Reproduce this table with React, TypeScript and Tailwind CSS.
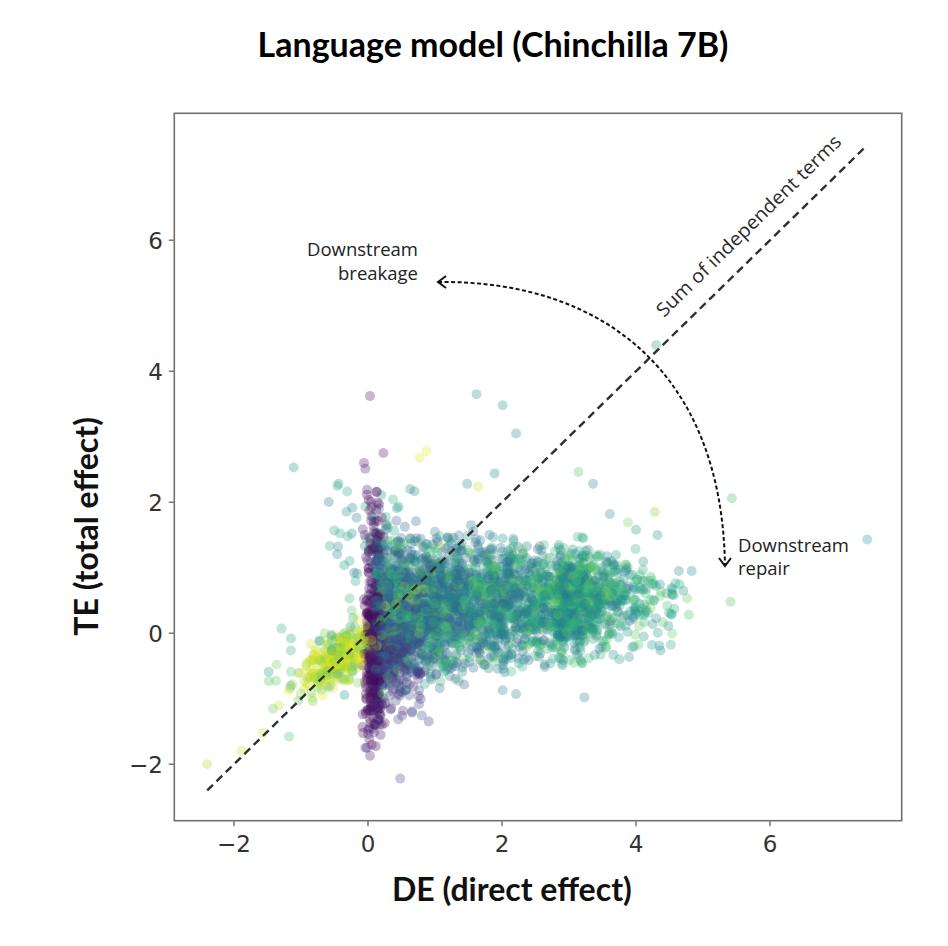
import { useMemo } from 'react';

type Pt = { x: number; y: number; c: number };

const X0 = 368;
const SX = 67;
const Y0 = 633.2;
const SY = 65.5;
const px = (x: number) => X0 + SX * x;
const py = (y: number) => Y0 - SY * y;

const VIRIDIS = [
  [68, 1, 84],
  [72, 36, 117],
  [65, 68, 135],
  [53, 95, 141],
  [42, 120, 142],
  [33, 145, 140],
  [34, 168, 132],
  [68, 191, 112],
  [122, 209, 81],
  [189, 223, 38],
  [253, 231, 37],
];

function viridis(t: number) {
  const v = Math.min(1, Math.max(0, t)) * 10;
  const i = Math.min(9, Math.floor(v));
  const f = v - i;
  const a = VIRIDIS[i];
  const b = VIRIDIS[i + 1];
  const m = (k: number) => Math.round(a[k] + (b[k] - a[k]) * f);
  return `rgb(${m(0)},${m(1)},${m(2)})`;
}

function mulberry32(seed: number) {
  let a = seed;
  return () => {
    a |= 0;
    a = (a + 0x6d2b79f5) | 0;
    let t = Math.imul(a ^ (a >>> 15), 1 | a);
    t = (t + Math.imul(t ^ (t >>> 7), 61 | t)) ^ t;
    return ((t ^ (t >>> 14)) >>> 0) / 4294967296;
  };
}

// outliers read off the reference by hand
const OUTLIERS: Pt[] = [
  { x: 4.3, y: 4.4, c: 0.55 },
  { x: 0.03, y: 3.62, c: 0.05 },
  { x: 1.62, y: 3.65, c: 0.48 },
  { x: 2.01, y: 3.48, c: 0.5 },
  { x: 2.21, y: 3.05, c: 0.45 },
  { x: -1.11, y: 2.53, c: 0.52 },
  { x: 0.23, y: 2.75, c: 0.05 },
  { x: 0.77, y: 2.68, c: 0.95 },
  { x: 0.87, y: 2.78, c: 0.97 },
  { x: -0.06, y: 2.6, c: 0.05 },
  { x: -0.04, y: 2.51, c: 0.08 },
  { x: -0.44, y: 2.28, c: 0.55 },
  { x: 5.43, y: 2.06, c: 0.68 },
  { x: 7.45, y: 1.43, c: 0.5 },
  { x: 5.41, y: 0.48, c: 0.72 },
  { x: 4.83, y: 0.95, c: 0.48 },
  { x: 4.64, y: 0.95, c: 0.45 },
  { x: 4.79, y: 0.28, c: 0.7 },
  { x: 4.28, y: 1.85, c: 0.8 },
  { x: 4.32, y: 1.5, c: 0.5 },
  { x: 3.14, y: 2.46, c: 0.72 },
  { x: 3.36, y: 2.28, c: 0.45 },
  { x: 3.61, y: 1.82, c: 0.5 },
  { x: 3.88, y: 1.69, c: 0.78 },
  { x: 4.0, y: 1.58, c: 0.55 },
  { x: 1.89, y: 2.44, c: 0.45 },
  { x: 1.48, y: 2.28, c: 0.45 },
  { x: 1.64, y: 2.24, c: 0.93 },
  { x: 0.63, y: 2.2, c: 0.48 },
  { x: 4.35, y: -0.19, c: 0.5 },
  { x: 3.23, y: -0.98, c: 0.45 },
  { x: 2.01, y: -0.87, c: 0.42 },
  { x: 2.21, y: -0.93, c: 0.45 },
  { x: 0.48, y: -2.22, c: 0.2 },
  { x: 0.03, y: -1.87, c: 0.05 },
  { x: -2.4, y: -2.0, c: 0.88 },
  { x: -1.88, y: -1.8, c: 0.9 },
  { x: -1.57, y: -1.52, c: 0.92 },
  { x: -1.18, y: -1.58, c: 0.7 },
  { x: -1.33, y: -1.1, c: 0.9 },
  { x: -1.48, y: -0.73, c: 0.72 },
  { x: -1.04, y: -1.03, c: 0.75 },
  { x: -1.29, y: 0.07, c: 0.65 },
  { x: -1.15, y: -0.08, c: 0.6 },
];

function makePoints(): Pt[] {
  const rng = mulberry32(11);
  const g = () => {
    const u = Math.max(1e-9, rng());
    const v = rng();
    return Math.sqrt(-2 * Math.log(u)) * Math.cos(2 * Math.PI * v);
  };
  const tg = (lim: number) => {
    let z = g();
    while (Math.abs(z) > lim) z = g();
    return z;
  };
  const out: Pt[] = [];

  // main teal fan, narrowing to the right
  for (let i = 0; i < 3000; i++) {
    const r = rng();
    const x =
      r < 0.45 ? 0.1 + Math.abs(g()) * 1.5 : r < 0.82 ? 0.1 + rng() * 3.2 : 2.8 + Math.abs(g()) * 0.75;
    if (x > 4.8) continue;
    const center = 0.38 + 0.03 * x;
    const sd = 0.55 - 0.05 * x;
    const y = center + tg(2.6) * sd;
    const green = rng() < 0.2 + 0.05 * x;
    const c = green
      ? 0.6 + rng() * 0.18
      : Math.min(0.6, Math.max(0.24, 0.33 + 0.045 * x + g() * 0.06));
    out.push({ x, y, c });
  }

  // purple strip at DE ~ 0
  for (let i = 0; i < 400; i++) {
    const x = 0.09 + g() * 0.075;
    const y = rng() < 0.7 ? Math.max(-1.75, -0.3 + g() * 0.65) : -1.6 + rng() * 3.8;
    out.push({ x, y, c: Math.min(0.18, Math.abs(g()) * 0.06) });
  }

  // indigo spill to the right, below zero
  for (let i = 0; i < 240; i++) {
    const x = 0.12 + Math.abs(g()) * 0.38;
    const y = -0.4 + tg(2.6) * 0.42;
    out.push({ x, y, c: 0.1 + rng() * 0.15 });
  }

  // yellow cluster on the diagonal
  for (let i = 0; i < 300; i++) {
    const t = tg(2.5);
    const x = -0.42 + 0.25 * t + g() * 0.15;
    const y = -0.38 + 0.18 * t + g() * 0.16;
    const c = rng() < 0.8 ? 0.85 + rng() * 0.15 : 0.72 + rng() * 0.12;
    out.push({ x: Math.min(x, 0.05), y, c });
  }

  // light green / teal around the yellow cluster
  for (let i = 0; i < 45; i++) {
    const x = -0.2 - Math.abs(g()) * 0.55;
    const y = x * 0.5 + g() * 0.35;
    out.push({ x, y, c: 0.5 + rng() * 0.3 });
  }

  // sparse points above the strip
  for (let i = 0; i < 40; i++) {
    out.push({ x: -0.6 + rng() * 1.4, y: 0.6 + rng() * 1.7, c: 0.4 + rng() * 0.25 });
  }

  // yellow sprinkled inside the fan near the diagonal
  for (let i = 0; i < 30; i++) {
    const x = rng() * 1.2;
    out.push({ x, y: x * 0.8 + g() * 0.3, c: 0.85 + rng() * 0.12 });
  }

  out.push(...OUTLIERS);

  for (let i = out.length - 1; i > 0; i--) {
    const j = Math.floor(rng() * (i + 1));
    [out[i], out[j]] = [out[j], out[i]];
  }
  return out;
}

const TICKS = [-2, 0, 2, 4, 6];
const tickLabel = (v: number) => (v < 0 ? `\u2212${-v}` : `${v}`);

const LEFT = 174.3;
const TOP = 113.3;
const RIGHT = 901.7;
const BOTTOM = 820.7;

function Scatter() {
  const pts = useMemo(makePoints, []);

  return (
    <svg width={810} height={770} viewBox="120 100 810 770" className="block shrink-0">
      <g fillOpacity={0.3}>
        {pts.map((p, i) => (
          <circle key={i} cx={px(p.x)} cy={py(p.y)} r={5} fill={viridis(p.c)} />
        ))}
      </g>

      {/* y = x reference */}
      <line
        x1={px(-2.4)}
        y1={py(-2.4)}
        x2={px(7.45)}
        y2={py(7.45)}
        stroke="#2f2f2f"
        strokeWidth={2.4}
        strokeDasharray="8 5"
      />
      <text
        x={664}
        y={318}
        transform="rotate(-44.4 664 318)"
        fontFamily="'Open Sans', sans-serif"
        fontSize={19}
        fill="#2a2a2a"
        textLength={250}
        lengthAdjust="spacingAndGlyphs"
      >
        Sum of independent terms
      </text>

      {/* breakage / repair arc */}
      <path
        d="M 438 282 C 600 280 722 370 725 566"
        fill="none"
        stroke="#111"
        strokeWidth={2}
        strokeDasharray="4 2.5"
      />
      <path d="M 446 276 L 438 282 L 446 288" fill="none" stroke="#111" strokeWidth={2} />
      <path d="M 719 558 L 725 566 L 731 558" fill="none" stroke="#111" strokeWidth={2} />

      <g fontFamily="'Open Sans', sans-serif" fontSize={18.5} fill="#222">
        <text x={418} y={256} textAnchor="end">
          Downstream
        </text>
        <text x={418} y={280} textAnchor="end">
          breakage
        </text>
        <text x={738} y={552}>
          Downstream
        </text>
        <text x={738} y={575}>
          repair
        </text>
      </g>

      {/* axes frame */}
      <rect
        x={LEFT}
        y={TOP}
        width={RIGHT - LEFT}
        height={BOTTOM - TOP}
        fill="none"
        stroke="#707070"
        strokeWidth={1.6}
      />

      <g stroke="#707070" strokeWidth={1.4}>
        {TICKS.map((t) => (
          <line key={`xt${t}`} x1={px(t)} y1={BOTTOM} x2={px(t)} y2={BOTTOM + 5.5} />
        ))}
        {TICKS.map((t) => (
          <line key={`yt${t}`} x1={LEFT - 5.5} y1={py(t)} x2={LEFT} y2={py(t)} />
        ))}
      </g>

      <g fontFamily="'DejaVu Sans', sans-serif" fontSize={23} fill="#333">
        {TICKS.map((t) => (
          <text key={`xl${t}`} x={px(t)} y={852} textAnchor="middle">
            {tickLabel(t)}
          </text>
        ))}
        {TICKS.map((t) => (
          <text key={`yl${t}`} x={163} y={py(t) + 8.4} textAnchor="end">
            {tickLabel(t)}
          </text>
        ))}
      </g>
    </svg>
  );
}

export default function App() {
  return (
    <div className="w-[948px] h-[946px] bg-white overflow-hidden text-black font-['Lato',sans-serif]">
      <h1 className="h-[100px] pt-[27px] pl-[38px] text-center text-[34px] leading-none font-bold">
        Language model (Chinchilla 7B)
      </h1>
      <div className="flex h-[770px]">
        <div className="w-[120px] shrink-0 flex items-center justify-center pl-[52px] pt-[82px]">
          <span className="[writing-mode:vertical-rl] rotate-180 text-[32px] leading-none font-bold text-[#111]">
            TE (total effect)
          </span>
        </div>
        <Scatter />
      </div>
      <div className="pl-[392px] pt-[3px] text-[32px] leading-none font-bold text-[#111]">DE (direct effect)</div>
    </div>
  );
}
